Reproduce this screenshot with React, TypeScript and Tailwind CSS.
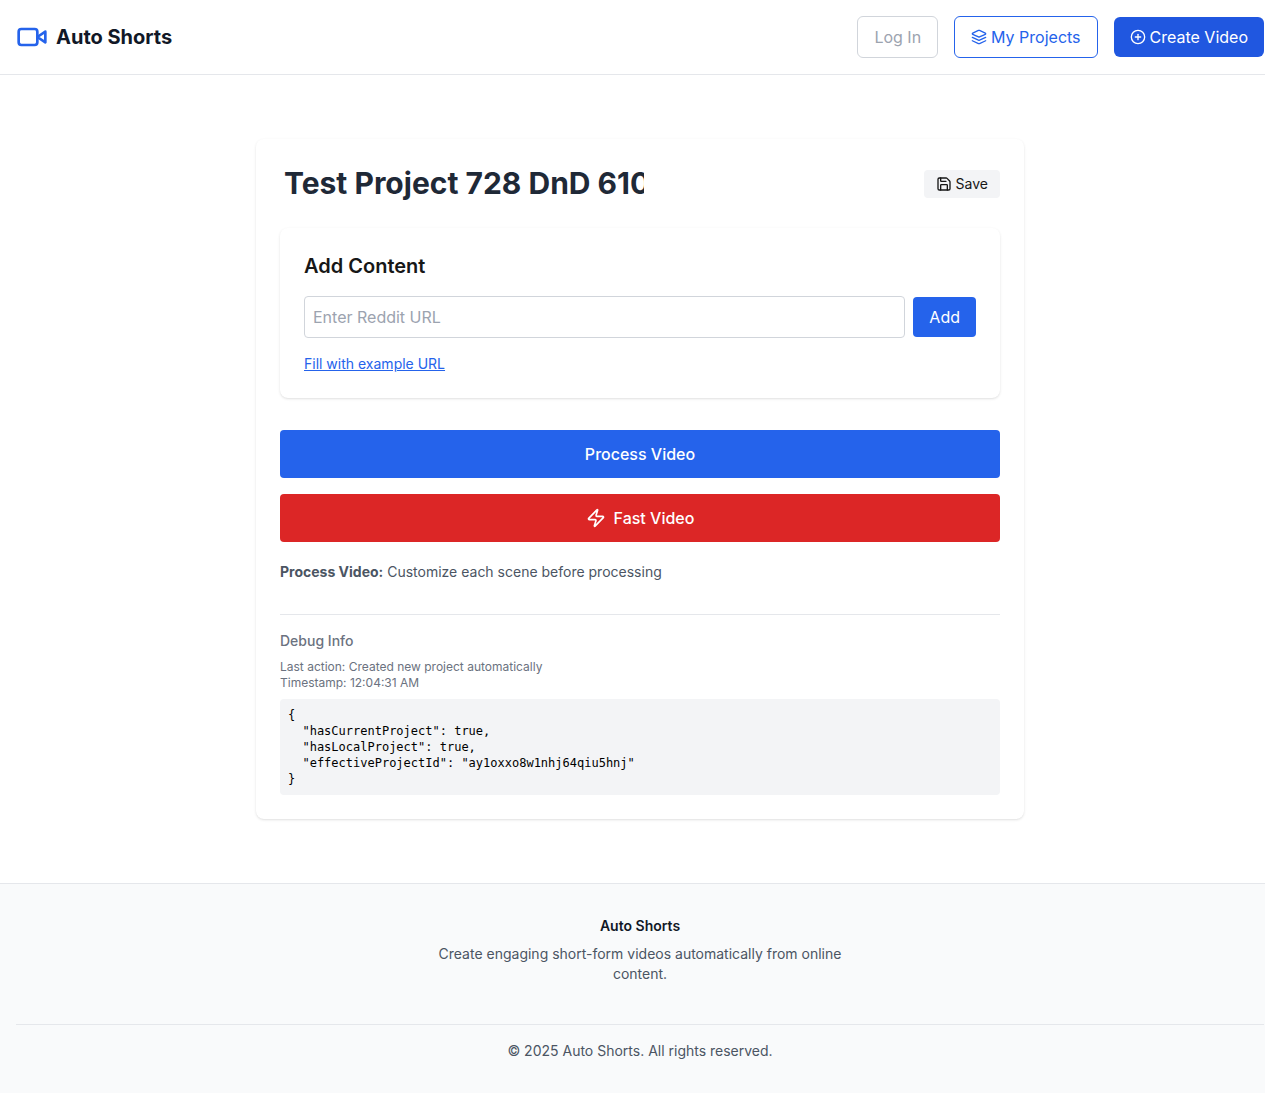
import type { ReactNode } from "react";
import { LuLayers, LuSave, LuZap } from "react-icons/lu";
import { CirclePlus } from "lucide-react";

const debugInfo = {
  hasCurrentProject: true,
  hasLocalProject: true,
  effectiveProjectId: "ay1oxxo8w1nhj64qiu5hnj",
};

function CameraIcon() {
  return (
    <svg
      className="size-8 text-[#2563eb]"
      viewBox="0 0 24 24"
      fill="none"
      stroke="currentColor"
      strokeWidth="2"
      strokeLinecap="round"
      strokeLinejoin="round"
    >
      <path d="m22 8-6 4 6 4V8Z" />
      <rect width="14" height="12" x="2" y="6" rx="2" ry="2" />
    </svg>
  );
}

function Header() {
  return (
    <header className="flex h-[75px] items-center justify-between border-b border-[#e5e7eb] px-4">
      <div className="flex items-center gap-2">
        <CameraIcon />
        <span className="text-xl font-bold text-[#111827]">Auto Shorts</span>
      </div>
      <nav className="flex items-center gap-4">
        <button className="rounded-md border border-[#d1d5db] px-4 py-2 text-[#9ca3af]">Log In</button>
        <button className="flex items-center gap-1 rounded-md border border-[#2563eb] px-4 py-2 text-[#2563eb]">
          <LuLayers className="size-4" />
          My Projects
        </button>
        <button className="flex items-center gap-1 rounded-md bg-[#2057e0] px-4 py-2 text-white">
          <CirclePlus className="size-4" />
          Create Video
        </button>
      </nav>
    </header>
  );
}

function AddContent() {
  return (
    <section className="rounded-lg bg-white p-6 shadow-sm">
      <h2 className="mb-4 text-xl font-semibold">Add Content</h2>
      <div className="flex items-center gap-2">
        <input
          className="h-[42px] min-w-0 flex-1 rounded border border-[#d1d5db] p-2 placeholder:text-[#9ca3af]"
          placeholder="Enter Reddit URL"
        />
        <button className="rounded bg-[#2563eb] px-4 py-2 text-white">Add</button>
      </div>
      <button className="mt-4 block text-sm text-[#2563eb] underline">Fill with example URL</button>
    </section>
  );
}

function WideButton({ className, children }: { className: string; children: ReactNode }) {
  return (
    <button className={`flex h-12 w-full items-center justify-center rounded font-medium text-white ${className}`}>
      {children}
    </button>
  );
}

function Footer() {
  return (
    <footer className="border-t border-[#e5e7eb] bg-[#f9fafb] px-4 py-8 text-center text-sm text-[#4b5563]">
      <h3 className="mb-2 font-semibold text-[#111827]">Auto Shorts</h3>
      <p className="mx-auto max-w-md">Create engaging short-form videos automatically from online content.</p>
      <div className="mt-10 border-t border-[#e5e7eb] pt-4">© 2025 Auto Shorts. All rights reserved.</div>
    </footer>
  );
}

export default function App() {
  return (
    <div className="w-full overflow-hidden bg-white font-['Inter',sans-serif] text-[#171717] antialiased">
      <div className="w-[1280px]">
        <Header />
        <main className="py-16">
          <div className="mx-auto w-[768px] rounded-lg bg-white p-6 shadow-sm">
            <div className="mb-6 flex h-[41px] items-center justify-between">
              <input
                className="mb-0.5 w-[368px] px-1 text-3xl font-bold text-[#1f2937]"
                defaultValue="Test Project 728 DnD 610"
              />
              <button className="flex items-center gap-1 rounded bg-[#f3f4f6] px-3 py-1 text-sm">
                <LuSave className="size-4" />
                Save
              </button>
            </div>
            <AddContent />
            <div className="mt-8 flex flex-col gap-4">
              <WideButton className="bg-[#2563eb]">Process Video</WideButton>
              <WideButton className="bg-[#dc2626]">
                <LuZap className="mr-2 size-5" />
                Fast Video
              </WideButton>
            </div>
            <p className="mt-5 text-sm text-[#4b5563]">
              <strong>Process Video:</strong> Customize each scene before processing
            </p>
            <div className="mt-8 border-t border-[#e5e7eb] pt-4">
              <h3 className="mb-2 text-sm font-medium text-[#6b7280]">Debug Info</h3>
              <div className="text-xs text-[#6b7280]">
                <p>Last action: Created new project automatically</p>
                <p>Timestamp: 12:04:31 AM</p>
              </div>
              <pre className="mt-2 rounded bg-[#f3f4f6] p-2 font-['DejaVu_Sans_Mono',monospace] text-xs text-black">
                {JSON.stringify(debugInfo, null, 2)}
              </pre>
            </div>
          </div>
        </main>
        <Footer />
      </div>
    </div>
  );
}
